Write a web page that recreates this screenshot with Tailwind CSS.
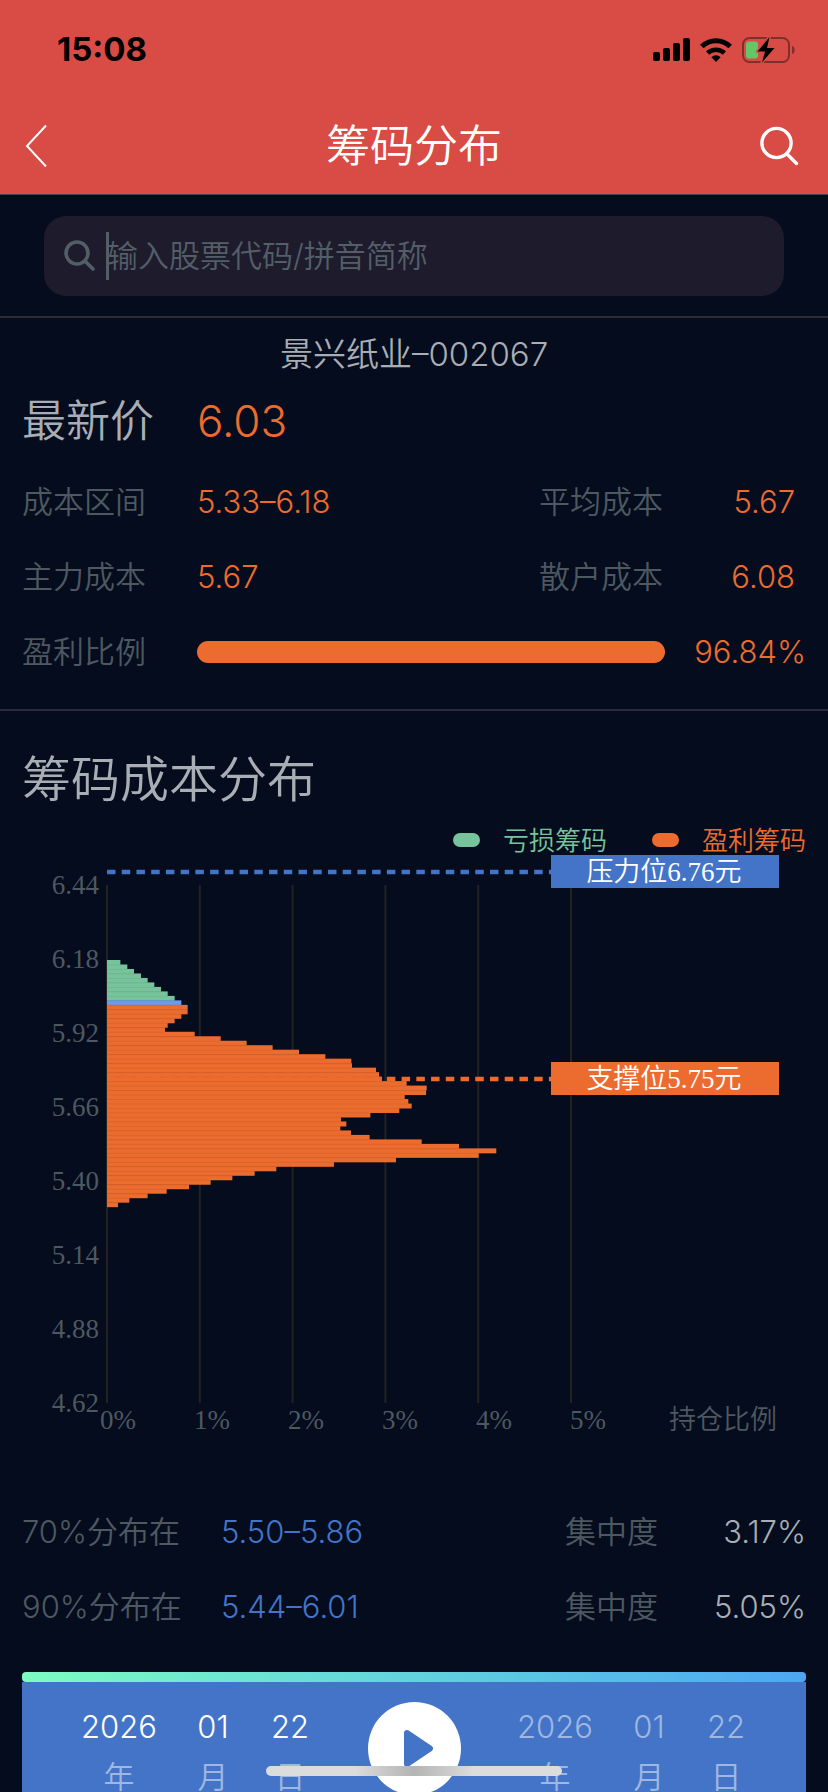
<!DOCTYPE html>
<html lang="zh-CN">
<head>
  <meta charset="UTF-8">
  <meta name="viewport" content="width=device-width, initial-scale=1.0">
  <title>筹码分布</title>
  <script src="https://cdn.jsdelivr.net/npm/@tailwindcss/browser@4"></script>
</head>
<body class="h-screen overflow-hidden bg-[#040c1d] font-['Inter','Noto_Sans_CJK_SC',sans-serif] font-[350] text-[#a9adb4]">

  <header class="border-b border-[#46434f] bg-[#d94b45]">
    <div class="flex h-[98px] items-center justify-between pt-[2px] pl-[57px] pr-8 text-black">
      <span class="text-[33px] font-bold">15:08</span>
      <div class="flex items-center gap-[10px]">
        <!-- signal -->
        <svg class="h-6 w-[37px]" viewBox="0 0 37 24">
          <rect x="0" y="14" width="7" height="9" rx="2"/>
          <rect x="10" y="10" width="7" height="13" rx="2"/>
          <rect x="20" y="5" width="7" height="18" rx="2"/>
          <rect x="30" y="0" width="7" height="23" rx="2"/>
        </svg>
        <!-- wifi -->
        <svg class="h-6 w-8" viewBox="0 0 32 24" fill="none" stroke="#000" stroke-width="5">
          <path d="M1.8 8.6a20 20 0 0 1 28.4 0"/>
          <path d="M7.6 15a12.4 12.4 0 0 1 16.8 0" stroke-width="4.6"/>
          <path d="M16 24l-4.6-4.8a6.6 6.6 0 0 1 9.2 0z" fill="#000" stroke="none"/>
        </svg>
        <!-- battery -->
        <svg class="h-[26px] w-[54px]" viewBox="0 0 54 26">
          <rect x="1" y="1" width="46" height="24" rx="6.5" fill="none" stroke="#7f2f2e" stroke-width="2"/>
          <path d="M50 9c3.6 1 3.6 7 0 8z" fill="#7f2f2e"/>
          <rect x="4" y="4.500" width="12" height="17" rx="3" fill="#62c766"/>
          <path d="M27.500 0L15.500 14.500h7.500L20 25.500L32.500 11H25z" fill="#000" stroke="#d94b45" stroke-width="3" paint-order="stroke" stroke-linejoin="round"/>
        </svg>
      </div>
    </div>
    <nav class="flex h-24 items-center justify-between px-6">
      <button type="button" aria-label="返回" class="w-12">
        <svg class="h-11 w-6" viewBox="0 0 24 44" fill="none" stroke="#fff" stroke-width="2">
          <path d="M22 1.500L3 22L22 42.500"/>
        </svg>
      </button>
      <h1 class="text-[44px] leading-[48px] text-white">筹码分布</h1>
      <button type="button" aria-label="搜索" class="flex w-12 justify-end pr-[5px]">
        <svg class="h-10 w-10" viewBox="0 0 40 40" fill="none" stroke="#fff" stroke-width="3.400" stroke-linecap="round">
          <circle cx="17.500" cy="17" r="14.600"/>
          <path d="M28 28l9.500 9.500"/>
        </svg>
      </button>
    </nav>
  </header>

  <form class="border-b-2 border-[#2b2c36] px-11 pt-[21px] pb-5">
    <label class="relative flex h-20 items-center rounded-[22px] bg-[#1e1b2d] pl-5">
      <svg class="h-8 w-8" viewBox="0 0 32 32" fill="none" stroke="#535e67" stroke-width="3.600" stroke-linecap="round">
        <circle cx="13" cy="13" r="11"/>
        <path d="M21.500 21.500l7.500 7.500"/>
      </svg>
      <!-- caret -->
      <span class="absolute left-[62px] h-12 w-[3px] bg-[#535e67]"></span>
      <input type="text" aria-label="股票代码" placeholder="输入股票代码/拼音简称" class="ml-[11px] min-w-0 flex-1 bg-transparent text-[31px] outline-none placeholder:text-[#535e67]">
    </label>
  </form>

  <section class="border-b-2 border-[#2b2c36] px-[22px] pb-5">
    <h2 class="flex h-[74px] items-center justify-center text-[33px]">景兴纸业–002067</h2>
    <div class="mb-[14px] flex h-[58px] items-center">
      <span class="w-[175px] text-[44px]">最新价</span>
      <span class="text-[44px] text-[#ec6b2e]">6.03</span>
    </div>
    <dl class="text-[31px] leading-[36px] text-[#ec6b2e]">
      <div class="flex h-[75px] items-center">
        <dt class="w-[175px] text-[#4e5860]">成本区间</dt>
        <dd class="flex-1">5.33–6.18</dd>
        <dt class="text-[#4e5860]">平均成本</dt>
        <dd class="mr-[11px] w-[132px] text-right">5.67</dd>
      </div>
      <div class="flex h-[75px] items-center">
        <dt class="w-[175px] text-[#4e5860]">主力成本</dt>
        <dd class="flex-1">5.67</dd>
        <dt class="text-[#4e5860]">散户成本</dt>
        <dd class="mr-[11px] w-[132px] text-right">6.08</dd>
      </div>
      <div class="flex h-[75px] items-center">
        <dt class="w-[175px] text-[#4e5860]">盈利比例</dt>
        <dd class="flex flex-1 items-center">
          <span class="h-[22px] flex-1 rounded-full bg-[#ec6b2e]"></span>
          <span class="w-[141px] text-right">96.84%</span>
        </dd>
      </div>
    </dl>
  </section>

  <section class="pt-11">
    <h2 class="px-[22px] text-[49px] leading-[50px]">筹码成本分布</h2>
    <div class="mt-[21px] flex h-7 items-center justify-end px-[22px] text-[26px]">
      <span class="h-[14px] w-[27px] rounded-full bg-[#77c39c]"></span>
      <span class="ml-[23px] text-[#77c39c]">亏损筹码</span>
      <span class="ml-[45px] h-[14px] w-[27px] rounded-full bg-[#ec6b2e]"></span>
      <span class="ml-[23px] text-[#ec6b2e]">盈利筹码</span>
    </div>
    <svg id="chart" class="block w-full font-['Liberation_Serif','Noto_Sans_CJK_SC',serif] text-[27px]" viewBox="0 0 828 586"></svg>
  </section>

  <dl class="mt-[54px] px-[22px] text-[31px] leading-[36px]">
    <div class="flex h-[75px] items-center">
      <dt class="w-[199px] text-[#4e5860]">70%分布在</dt>
      <dd class="flex-1 text-[#4374c7]">5.50–5.86</dd>
      <dt class="text-[#4e5860]">集中度</dt>
      <dd class="w-[148px] text-right">3.17%</dd>
    </div>
    <div class="flex h-[75px] items-center">
      <dt class="w-[199px] text-[#4e5860]">90%分布在</dt>
      <dd class="flex-1 text-[#4374c7]">5.44–6.01</dd>
      <dt class="text-[#4e5860]">集中度</dt>
      <dd class="w-[148px] text-right">5.05%</dd>
    </div>
  </dl>

  <section class="mx-[22px] mt-7">
    <div class="h-[10px] rounded-[4px] bg-linear-to-r from-[#7dfcc0] to-[#4ea6f2]"></div>
    <div class="flex items-start justify-between bg-[#4374c7] px-12 pt-5 pb-6 text-center text-[31px] leading-[50px]">
      <div class="grid grid-cols-[98px_90px_64px] text-[#9fb7e1]">
        <span class="text-white">2026</span><span class="text-white">01</span><span class="text-white">22</span>
        <span>年</span><span>月</span><span>日</span>
      </div>
      <button type="button" aria-label="播放">
        <svg class="h-[93px] w-[93px]" viewBox="0 0 93 93">
          <circle cx="46.500" cy="46.500" r="46.500" fill="#fff"/>
          <path d="M39 31L62 46.500L39 62z" fill="#4374c7" stroke="#4374c7" stroke-width="6" stroke-linejoin="round"/>
        </svg>
      </button>
      <div class="grid grid-cols-[98px_90px_64px] text-[#9fb7e1]">
        <span>2026</span><span>01</span><span>22</span>
        <span>年</span><span>月</span><span>日</span>
      </div>
    </div>
  </section>

  <!-- home indicator -->
  <div class="fixed bottom-4 left-1/2 h-[10px] w-[296px] -translate-x-1/2 rounded-full bg-linear-to-r from-[#dcdcdc] from-30% via-[#b4b4b4] to-[#dcdcdc] to-70%"></div>

  <script>
    // share of holdings (%) per price step, from 6.18 down
    const chips = [
      0.144, 0.219, 0.291, 0.366, 0.438, 0.510, 0.582, 0.654, 0.729, 0.801, 0.869,
      0.869, 0.801, 0.729, 0.654, 0.625, 0.945, 1.225, 1.505, 1.785, 2.069, 2.353,
      2.633, 2.640, 2.899, 2.931, 2.963, 3.229, 3.445, 3.438, 3.208, 3.247, 3.283,
      3.150, 2.838, 2.522, 2.579, 2.514, 2.629, 2.830, 3.391, 3.793, 4.195, 4.005,
      3.114, 2.446, 1.825, 1.591, 1.351, 1.117, 0.884, 0.643, 0.438, 0.241, 0.119
    ];
    const prices = ['6.44', '6.18', '5.92', '5.66', '5.40', '5.14', '4.88', '4.62'];
    const left = 107, top0 = 31, bottom = 549, perCent = 92.8, step = 4.485;
    const lossRows = 9;

    function rowColor(i) {
      if (i < lossRows) return '#77c39c';
      return i === lossRows ? '#6c9bee' : '#ec6b2e';
    }

    function level(y, color, text) {
      return `
        <path d="M${left} ${y}H551" stroke="${color}" stroke-width="4.500" stroke-dasharray="8.500 6.230"/>
        <rect x="551" y="${y - 17}" width="228" height="33" fill="${color}"/>
        <text x="664" y="${y + 9}" text-anchor="middle" fill="#fff">${text}</text>`;
    }

    function drawChart() {
      let out = '';
      for (let i = 0; i <= 5; i++) {
        const x = left + i * perCent;
        out += `<path d="M${x} ${top0}V${bottom}" stroke="#222221" stroke-width="2"/>`;
        out += `<text x="${100 + i * 94}" y="575" fill="#4e5860">${i}%</text>`;
      }
      prices.forEach((p, i) => {
        out += `<text x="99" y="${top0 + 9 + i * 74}" text-anchor="end" fill="#4e5860">${p}</text>`;
      });
      out += '<text x="669" y="575" fill="#4e5860">持仓比例</text>';
      // rows overlap a little so that no background shows between them
      chips.forEach((v, i) => {
        const y = 106 + i * step;
        out += `<rect x="${left}" y="${y}" width="${v * perCent}" height="${step + 0.5}" fill="${rowColor(i)}"/>`;
        if (i > 0) out += `<path d="M${left} ${y + 0.5}h${Math.min(v, chips[i - 1]) * perCent}" stroke="#000" stroke-opacity="0.06"/>`;
      });
      out += level(18, '#4374c7', '压力位6.76元');
      out += level(225, '#ec6b2e', '支撑位5.75元');
      document.getElementById('chart').innerHTML = out;
    }

    drawChart();
  </script>
</body>
</html>
